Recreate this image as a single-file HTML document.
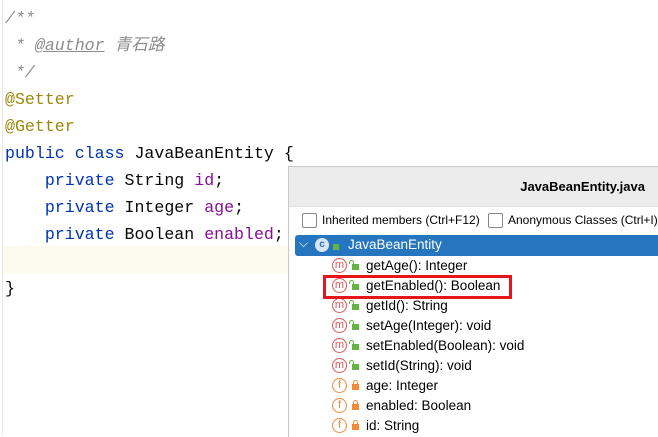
<!DOCTYPE html>
<html><head><meta charset="utf-8"><style>
body{margin:0;width:658px;height:436px;overflow:hidden;background:#fff;position:relative;font-family:"Liberation Sans","Noto Sans CJK SC",sans-serif}
.gut{position:absolute;left:2px;top:0;width:1px;height:436px;background:#e8e8e8}
.code{position:absolute;left:5px;top:5px;font-family:"Liberation Mono",monospace;font-size:16.6px;line-height:27px;color:#080808;white-space:pre}
.cm{color:#8c8c8c;font-style:italic}
.an{color:#9e880d}
.kw{color:#0033b3}
.fd{color:#871094}
.hl{position:absolute;left:3px;top:246px;width:290px;height:27px;background:#fcfaed}
.pop{position:absolute;left:288px;top:166px;width:370px;height:270px;background:#fff;border-left:1px solid #c9c9c9;border-top:1px solid #c9c9c9;overflow:hidden}
.hdr{height:39px;background:#ececec;border-bottom:1px solid #e0e0e0;font-weight:bold;font-size:13px;line-height:40px;text-align:right;padding-right:14px;color:#000}
.cb{position:absolute;top:46px;width:13px;height:13px;border:1px solid #888;border-radius:2px;background:#fff}
.cbl{position:absolute;top:46px;font-size:12px;color:#000;white-space:nowrap}
.sel{position:absolute;left:6px;top:68px;width:364px;height:21px;background:#2675bf;border-radius:3px 0 0 3px;color:#fff;font-size:13.5px}
.row{position:absolute;left:0;height:20px;font-size:13.5px;color:#000;line-height:20px}
.ic{position:absolute;left:43px;top:2px;width:13px;height:13px;border:1.5px solid;border-radius:50%;font-size:11px;line-height:13px;text-align:center;font-family:"Liberation Sans",sans-serif}
.m{border-color:#e05555;color:#e05555}
.f{border-color:#f08c3c;color:#f08c3c}
.lk{position:absolute;left:63px;top:8px;width:7px;height:6px}
.lk:before{content:"";position:absolute;left:1px;top:-4px;width:3px;height:3px;border:1px solid;border-bottom:none;border-radius:3px 3px 0 0}
.g{background:#62b543;color:#62b543}
.g:before{left:-3px}
.o{background:#f08c3c;color:#f08c3c}
.tx{position:absolute;left:77px;top:0;white-space:nowrap}
.red{position:absolute;left:34px;top:108px;width:183px;height:18px;border:3px solid #e8141c}
</style></head><body>
<div class="gut"></div>
<div class="hl"></div>
<div class="code"><span class="cm">/**</span>
<span class="cm"> * <u>@author</u> 青石路</span>
<span class="cm"> */</span>
<span class="an">@Setter</span>
<span class="an">@Getter</span>
<span class="kw">public class</span> JavaBeanEntity {
    <span class="kw">private</span> String <span class="fd">id</span>;
    <span class="kw">private</span> Integer <span class="fd">age</span>;
    <span class="kw">private</span> Boolean <span class="fd">enabled</span>;

}</div>
<div class="pop">
<div class="hdr">JavaBeanEntity.java</div>
<div class="cb" style="left:13px"></div><div class="cbl" style="left:33px">Inherited members (Ctrl+F12)</div>
<div class="cb" style="left:199px"></div><div class="cbl" style="left:219px">Anonymous Classes (Ctrl+I)</div>
<div class="sel"><span style="position:absolute;left:4px;top:1px;font-size:12px">&#x2335;</span>
<div style="position:absolute;left:20px;top:3px;width:14px;height:14px;border-radius:50%;background:#d9e6f7;color:#2675bf;font-size:10px;line-height:14px;text-align:center;font-weight:bold">c</div>
<div style="position:absolute;left:38px;top:9px;width:6px;height:6px;background:#62b543"></div>
<span style="position:absolute;left:53px;top:2px">JavaBeanEntity</span></div>
<div class="row" style="top:89px"><div class="ic m">m</div><div class="lk g"></div><span class="tx">getAge(): Integer</span></div>
<div class="row" style="top:109px"><div class="ic m">m</div><div class="lk g"></div><span class="tx">getEnabled(): Boolean</span></div>
<div class="row" style="top:129px"><div class="ic m">m</div><div class="lk g"></div><span class="tx">getId(): String</span></div>
<div class="row" style="top:149px"><div class="ic m">m</div><div class="lk g"></div><span class="tx">setAge(Integer): void</span></div>
<div class="row" style="top:169px"><div class="ic m">m</div><div class="lk g"></div><span class="tx">setEnabled(Boolean): void</span></div>
<div class="row" style="top:189px"><div class="ic m">m</div><div class="lk g"></div><span class="tx">setId(String): void</span></div>
<div class="row" style="top:209px"><div class="ic f">f</div><div class="lk o"></div><span class="tx">age: Integer</span></div>
<div class="row" style="top:229px"><div class="ic f">f</div><div class="lk o"></div><span class="tx">enabled: Boolean</span></div>
<div class="row" style="top:249px"><div class="ic f">f</div><div class="lk o"></div><span class="tx">id: String</span></div>
<div class="red"></div>
</div>
</body></html>
